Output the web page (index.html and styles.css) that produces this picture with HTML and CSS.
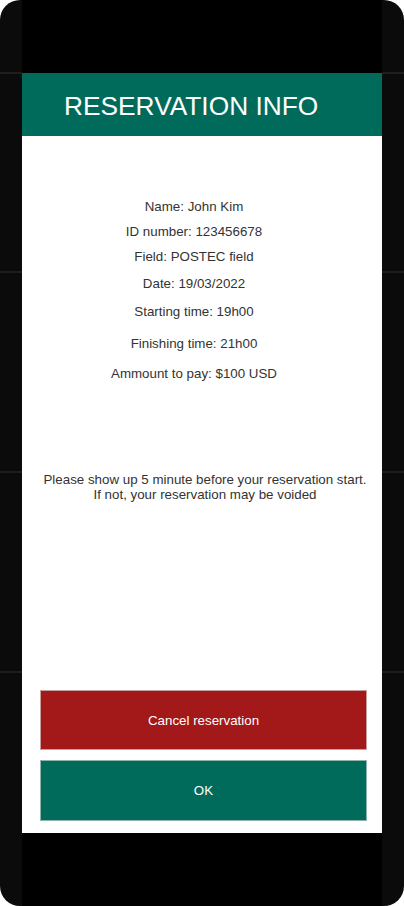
FILE: index.html
```html
<!DOCTYPE html>
<html lang="en">
<head>
<meta charset="utf-8">
<title>Reservation info</title>
<link rel="stylesheet" href="styles.css">
</head>
<body>
<div class="phone">
  <div class="screen">
    <div class="top-bar"></div>
    <header class="header">
      <h1 class="title">RESERVATION INFO</h1>
    </header>
    <main class="panel">
      <div class="info">
        <p class="line">Name: John Kim</p>
        <p class="line">ID number: 123456678</p>
        <p class="line">Field: POSTEC field</p>
        <p class="line gap-2">Date: 19/03/2022</p>
        <p class="line gap-3">Starting time: 19h00</p>
        <p class="line gap-7">Finishing time: 21h00</p>
        <p class="line gap-5">Ammount to pay: $100 USD</p>
      </div>
      <p class="note">Please show up 5 minute before your reservation start.<br>If not, your reservation may be voided</p>
      <div class="actions">
        <button class="btn btn-cancel" type="button">Cancel reservation</button>
        <button class="btn btn-ok" type="button">OK</button>
      </div>
    </main>
    <div class="bottom-bar"></div>
  </div>
</div>
</body>
</html>
```

FILE: styles.css
```css
html, body {
  margin: 0;
  padding: 0;
  background: #ffffff;
}

body {
  font-family: "Liberation Sans", Arial, sans-serif;
}

.phone {
  width: 404px;
  height: 906px;
  border-radius: 20px;
  overflow: hidden;
  display: flex;
  justify-content: center;
  background:
    linear-gradient(to bottom,
      #0b0b0b 0, #0b0b0b 72px, #1e1e1e 72px, #1e1e1e 74px,
      #0b0b0b 74px, #0b0b0b 271px, #1e1e1e 271px, #1e1e1e 273px,
      #0b0b0b 273px, #0b0b0b 471px, #1e1e1e 471px, #1e1e1e 473px,
      #0b0b0b 473px, #0b0b0b 671px, #1e1e1e 671px, #1e1e1e 673px,
      #0b0b0b 673px, #0b0b0b 100%);
}

.screen {
  width: 360px;
  height: 906px;
  background: #000;
  display: flex;
  flex-direction: column;
}

.top-bar {
  height: 73px;
  flex: none;
}

.header {
  height: 63px;
  flex: none;
  background: #006b5b;
  display: flex;
  align-items: center;
  padding: 4px 0 0 42px;
  box-sizing: border-box;
}

.title {
  margin: 0;
  font-family: "Liberation Sans", Arial, sans-serif;
  font-weight: normal;
  font-size: 26.3px;
  color: #ffffff;
}

.panel {
  height: 697px;
  flex: none;
  background: #ffffff;
  display: flex;
  flex-direction: column;
  padding: 58px 15px 12px 18px;
  box-sizing: border-box;
}

.info {
  display: flex;
  flex-direction: column;
  align-items: center;
  margin-left: -18px;
  margin-right: 1px;
}

.line {
  margin: 0;
  height: 25px;
  line-height: 25px;
  font-size: 13.33px;
  color: #333333;
  text-align: center;
}

.gap-2 { margin-top: 2px; }
.gap-3 { margin-top: 3px; }
.gap-5 { margin-top: 5px; }
.gap-7 { margin-top: 7px; }

.note {
  margin: 86px -3px 0 0;
  font-size: 13.33px;
  line-height: 15px;
  color: #333333;
  text-align: center;
}

.actions {
  margin-top: auto;
  display: flex;
  flex-direction: column;
  gap: 10px;
}

.btn {
  height: 60px;
  border: 1px solid #b9b9b9;
  font-family: "Liberation Sans", Arial, sans-serif;
  font-size: 13.33px;
  color: #ffffff;
  padding: 0;
  margin: 0;
  cursor: pointer;
}

.btn-cancel {
  background: #a31818;
  border-color: #c8a0a0;
}

.btn-ok {
  height: 61px;
  background: #006b5b;
  border-color: #8fb3ad;
}

.bottom-bar {
  flex: 1;
}
```
